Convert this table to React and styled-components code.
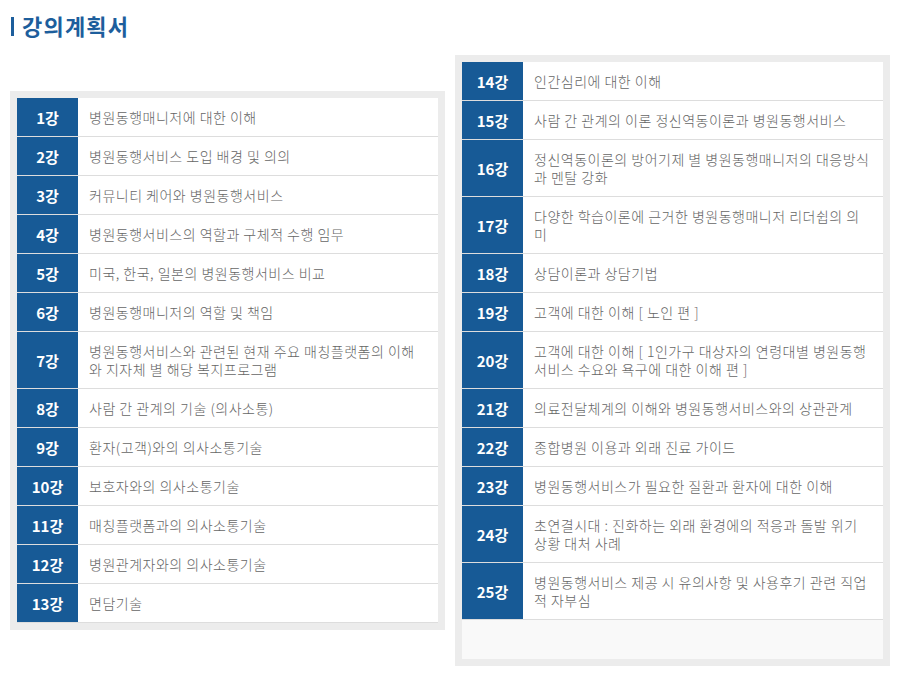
import styled, { createGlobalStyle } from 'styled-components';

const leftLessons = [
	{ no: 1, title: '병원동행매니저에 대한 이해' },
	{ no: 2, title: '병원동행서비스 도입 배경 및 의의' },
	{ no: 3, title: '커뮤니티 케어와 병원동행서비스' },
	{ no: 4, title: '병원동행서비스의 역할과 구체적 수행 임무' },
	{ no: 5, title: '미국, 한국, 일본의 병원동행서비스 비교' },
	{ no: 6, title: '병원동행매니저의 역할 및 책임' },
	{ no: 7, title: '병원동행서비스와 관련된 현재 주요 매칭플랫폼의 이해와 지자체 별 해당 복지프로그램' },
	{ no: 8, title: '사람 간 관계의 기술 (의사소통)' },
	{ no: 9, title: '환자(고객)와의 의사소통기술' },
	{ no: 10, title: '보호자와의 의사소통기술' },
	{ no: 11, title: '매칭플랫폼과의 의사소통기술' },
	{ no: 12, title: '병원관계자와의 의사소통기술' },
	{ no: 13, title: '면담기술' },
];

const rightLessons = [
	{ no: 14, title: '인간심리에 대한 이해' },
	{ no: 15, title: '사람 간 관계의 이론 정신역동이론과 병원동행서비스' },
	{ no: 16, title: '정신역동이론의 방어기제 별 병원동행매니저의 대응방식과 멘탈 강화' },
	{ no: 17, title: '다양한 학습이론에 근거한 병원동행매니저 리더쉽의 의미' },
	{ no: 18, title: '상담이론과 상담기법' },
	{ no: 19, title: '고객에 대한 이해 [ 노인 편 ]' },
	{ no: 20, title: '고객에 대한 이해 [ 1인가구 대상자의 연령대별 병원동행서비스 수요와 욕구에 대한 이해 편 ]' },
	{ no: 21, title: '의료전달체계의 이해와 병원동행서비스와의 상관관계' },
	{ no: 22, title: '종합병원 이용과 외래 진료 가이드' },
	{ no: 23, title: '병원동행서비스가 필요한 질환과 환자에 대한 이해' },
	{ no: 24, title: '초연결시대 : 진화하는 외래 환경에의 적응과 돌발 위기 상황 대처 사례' },
	{ no: 25, title: '병원동행서비스 제공 시 유의사항 및 사용후기 관련 직업적 자부심' },
];

const Syllabus = ({ lessons, filler, offset }) => (
	<Panel $offset={offset}>
		<Table>
			{lessons.map((l) => (
				<Row key={l.no}>
					<Num>{l.no}강</Num>
					<Title>{l.title}</Title>
				</Row>
			))}
			{filler && <Filler />}
		</Table>
	</Panel>
);

const App = () => {
	return (
		<Page>
			<GlobalStyle />
			<Heading>강의계획서</Heading>
			<Columns>
				<Syllabus lessons={leftLessons} offset={36} />
				<Syllabus lessons={rightLessons} filler />
			</Columns>
		</Page>
	);
};

const GlobalStyle = createGlobalStyle`
	body {
		margin: 0;
		background: #fff;
		font-family: 'Noto Sans CJK KR', 'Noto Sans', sans-serif;
	}
`;

const Page = styled.div`
	width: 908px;
	padding: 0 18px 20px 10px;
	box-sizing: border-box;
`;

const Heading = styled.h2`
	margin: 0 0 15px;
	padding-top: 10px;
	display: flex;
	align-items: center;
	font-size: 22px;
	line-height: 30px;
	font-weight: 700;
	color: #1d5e9c;
	letter-spacing: 1.2px;

	&::before {
		content: '';
		display: block;
		width: 3px;
		height: 19px;
		margin: 2px 8px 0 1px;
		background: #1d5e9c;
	}
`;

const Columns = styled.div`
	display: flex;
	align-items: flex-start;
	gap: 10px;
`;

const Panel = styled.div`
	flex: 1;
	margin-top: ${(p) => p.$offset || 0}px;
	padding: 7px;
	background: #ececec;
`;

const Table = styled.div`
	display: flex;
	flex-direction: column;
	background: #fff;
`;

const Row = styled.div`
	display: flex;
	border-bottom: 1px solid #dddddd;
`;

const Num = styled.div`
	flex: 0 0 61px;
	display: flex;
	align-items: center;
	justify-content: center;
	background: #175a96;
	color: #fff;
	font-size: 15px;
	font-weight: 700;
`;

const Title = styled.div`
	flex: 1;
	padding: 10px 10px 10px 11px;
	font-size: 14px;
	font-weight: 300;
	line-height: 18px;
	letter-spacing: 0.5px;
	color: #666;
`;

const Filler = styled.div`
	height: 39px;
	background: #f9f9f9;
`;

export default App;
